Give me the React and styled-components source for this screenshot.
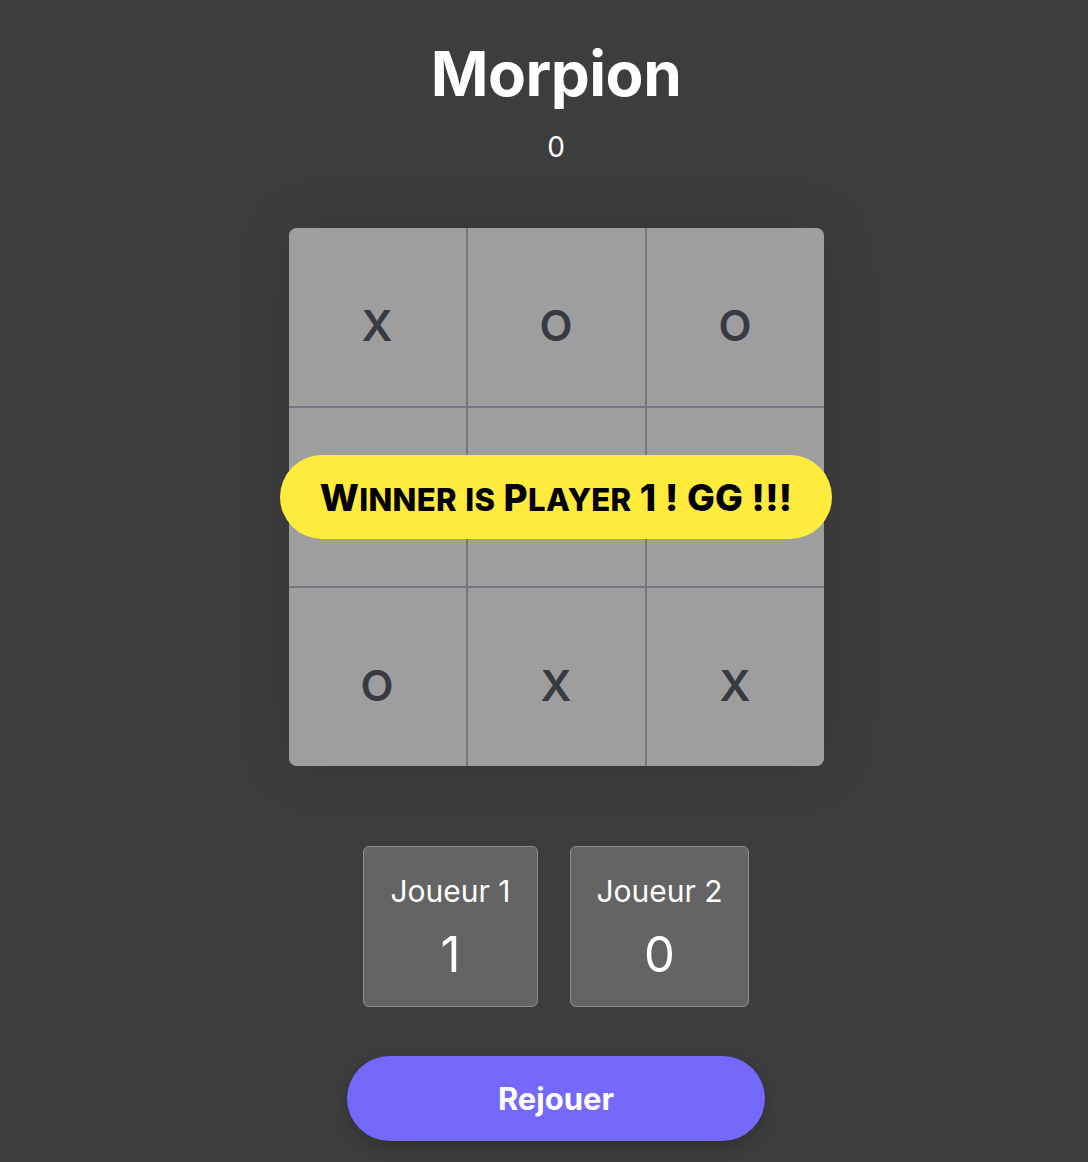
import React from 'react';
import styled, { createGlobalStyle } from 'styled-components';

const GlobalStyle = createGlobalStyle`
  html, body {
    margin: 0;
    padding: 0;
    background: #3d3d3d;
    font-family: Inter, "Noto Sans", sans-serif;
    color: #fff;
  }
`;

const Page = styled.main`
  display: flex;
  flex-direction: column;
  align-items: center;
  min-height: 1162px;
  padding: 36px 0 0 24px;
  box-sizing: border-box;
`;

const Title = styled.h1`
  margin: 0;
  font-size: 62px;
  font-weight: 700;
  line-height: 76px;
  letter-spacing: -0.5px;
`;

const Turn = styled.div`
  font-size: 28px;
  line-height: 34px;
  margin-top: 18px;
`;

const BoardWrap = styled.div`
  position: relative;
  margin-top: 64px;
`;

const Board = styled.div`
  display: grid;
  grid-template-columns: repeat(3, 177px);
  grid-template-rows: repeat(3, 178px);
  gap: 2px;
  width: 535px;
  background: #737880;
  border-radius: 8px;
  overflow: hidden;
  box-shadow: 0 0 60px rgba(0, 0, 0, 0.12);
`;

const Cell = styled.div`
  display: flex;
  align-items: center;
  justify-content: center;
  padding-top: 15px;
  box-sizing: border-box;
  background: #9e9e9e;
  color: #383a41;
  font-size: 43px;
  font-weight: 600;
`;

const Banner = styled.div`
  position: absolute;
  left: 50%;
  top: 50%;
  transform: translate(-50%, -50%);
  width: 552px;
  height: 84px;
  border-radius: 42px;
  background: #ffeb3b;
  color: #000;
  display: flex;
  align-items: center;
  justify-content: center;
  font-size: 37px;
  font-weight: 800;
  text-transform: uppercase;
  letter-spacing: 0.3px;
  white-space: pre;
`;

const Small = styled.span`
  font-size: 0.84em;
`;

const Scores = styled.div`
  display: flex;
  gap: 32px;
  margin-top: 80px;
`;

const ScoreCard = styled.div`
  display: flex;
  flex-direction: column;
  align-items: center;
  box-sizing: border-box;
  width: ${p => p.$w}px;
  height: 161px;
  padding-top: 26px;
  background: #646464;
  border: 1.5px solid #8e8e8e;
  border-radius: 6px;
`;

const PlayerName = styled.div`
  font-size: 30px;
  line-height: 36px;
`;

const PlayerScore = styled.div`
  font-size: 49px;
  line-height: 58px;
  margin-top: 17px;
`;

const ReplayButton = styled.button`
  margin-top: 49px;
  width: 418px;
  height: 85px;
  border: none;
  border-radius: 43px;
  background: #7469fa;
  color: #fff;
  font-family: inherit;
  font-size: 31px;
  font-weight: 700;
  box-shadow: 0 6px 16px rgba(0, 0, 0, 0.2);
  cursor: pointer;
`;

const cells = ['X', 'O', 'O', '', '', '', 'O', 'X', 'X'];

// lowercase letters rendered as smaller capitals
const SmallCaps = ({ text }) => (
  <span>
    {text.split('').map((ch, i) =>
      ch !== ch.toUpperCase() ? <Small key={i}>{ch}</Small> : <React.Fragment key={i}>{ch}</React.Fragment>
    )}
  </span>
);

export default function App() {
  return (
    <>
      <GlobalStyle />
      <Page>
        <Title>Morpion</Title>
        <Turn>0</Turn>
        <BoardWrap>
          <Board>
            {cells.map((c, i) => (
              <Cell key={i}>{c}</Cell>
            ))}
          </Board>
          <Banner>
            <SmallCaps text="Winner is Player 1 ! GG !!!" />
          </Banner>
        </BoardWrap>
        <Scores>
          <ScoreCard $w={175}>
            <PlayerName>Joueur 1</PlayerName>
            <PlayerScore>1</PlayerScore>
          </ScoreCard>
          <ScoreCard $w={179}>
            <PlayerName>Joueur 2</PlayerName>
            <PlayerScore>0</PlayerScore>
          </ScoreCard>
        </Scores>
        <ReplayButton>Rejouer</ReplayButton>
      </Page>
    </>
  );
}
